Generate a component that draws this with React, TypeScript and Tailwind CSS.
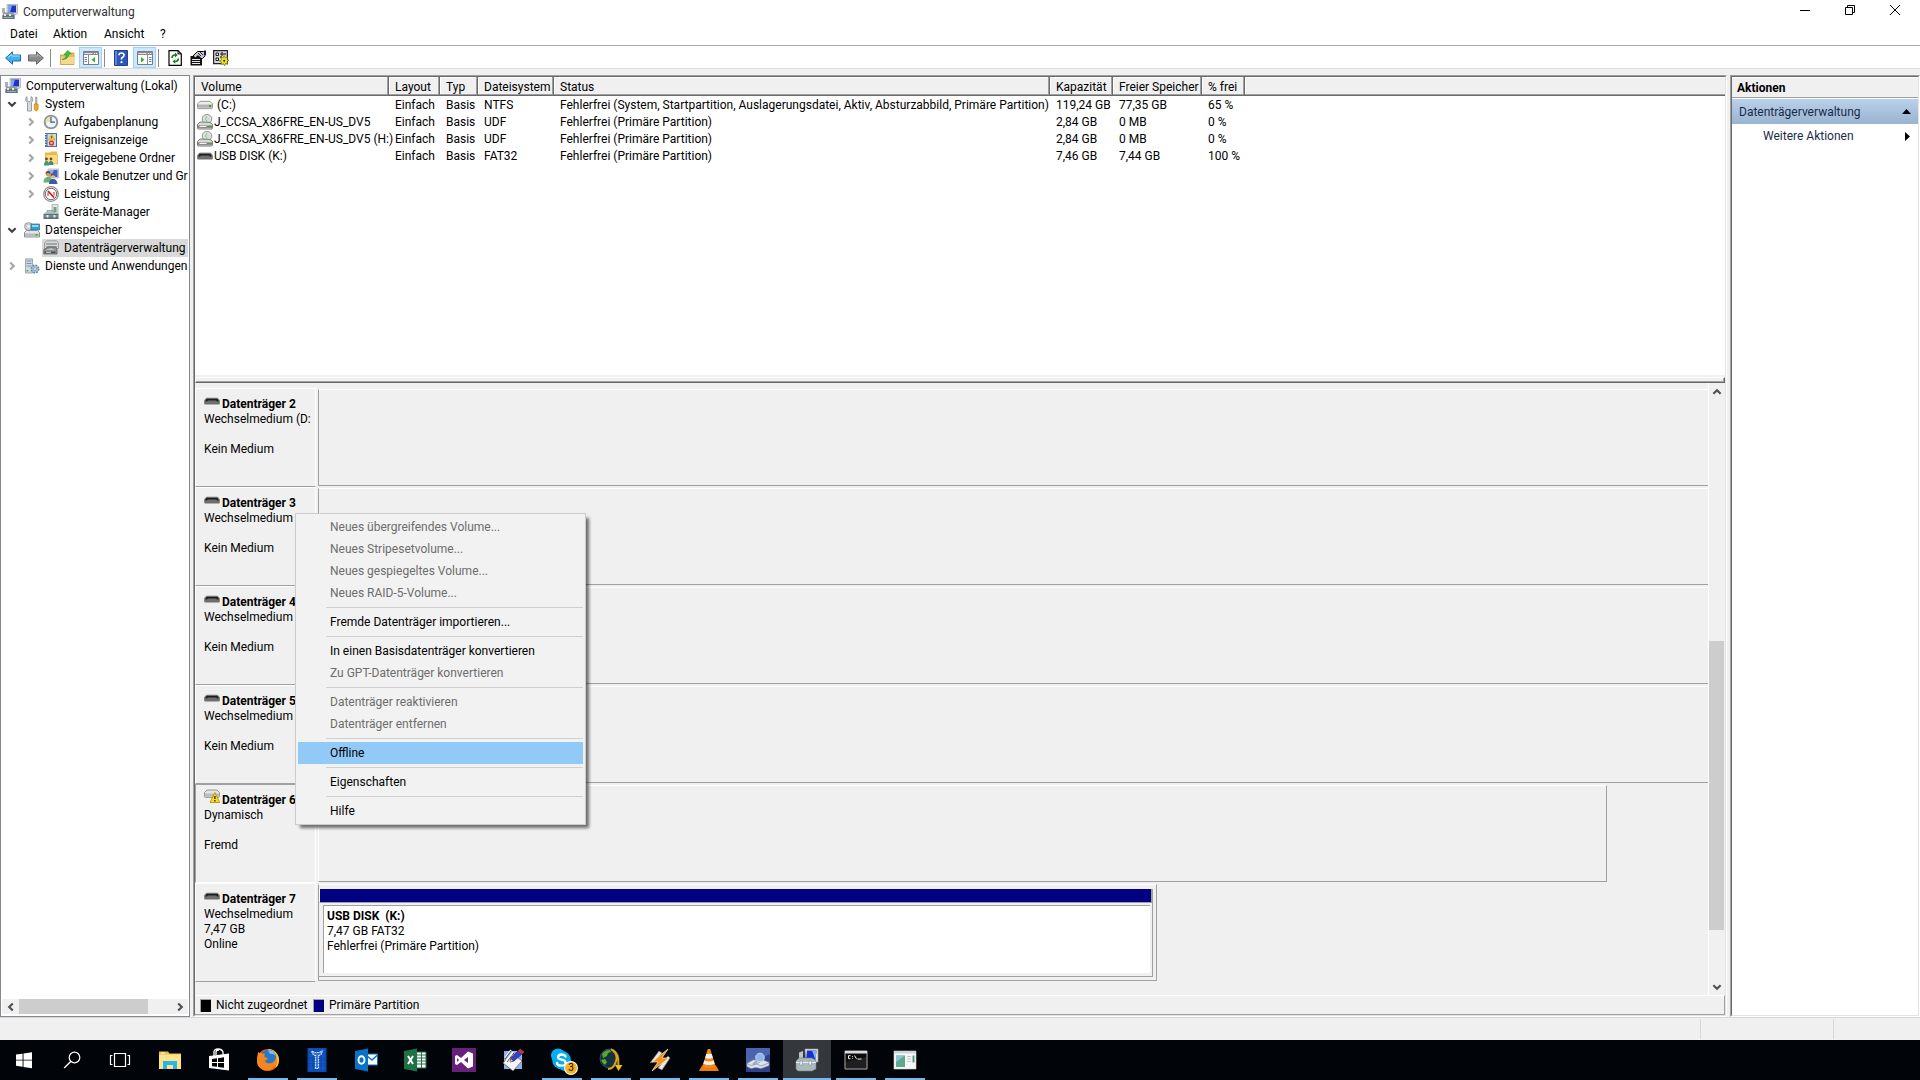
import React from "react";

type Kids = { children: React.ReactNode };

function Ico({ children }: Kids) {
  return (
    <svg className="size-4 shrink-0" viewBox="0 0 16 16" aria-hidden="true">
      {children}
    </svg>
  );
}

function Big({ children }: Kids) {
  return (
    <svg className="size-6" viewBox="0 0 24 24" aria-hidden="true">
      {children}
    </svg>
  );
}

/* ---------- small icons ---------- */

const Computer = () => (
  <Ico>
    <path d="M5 .5h10.500v9L13 11H5z" fill="#d8d8d0" stroke="#9a9a94" strokeWidth=".6" />
    <path d="M6 1.500h8v7H6z" fill="#1c34c8" />
    <path d="M6 1.500h4l-2 7H6z" fill="#7aa6f4" />
    <path d="M0 4h3v5H0z" fill="#a9b4b8" />
    <path d="M1 8.500h10l1.500 2V15H.5z" fill="#8d9da0" />
    <path d="M.5 11h12v4H.5z" fill="#5f7478" />
    <path d="M2 10h2v2H2zM7 10h2v2H7z" fill="#dfe8ea" />
    <path d="M2 13h9v1H2z" fill="#9fb0b3" />
  </Ico>
);
const Tools = () => (
  <Ico>
    <path d="M3 .5v4l2 1.500 2-1.500v-4c2 1 2.500 4 .5 6V15h-4V6.500C1 5 1 2 3 .5z" fill="#d7dadc" stroke="#85898c" strokeWidth=".8" />
    <path d="M11.500 1h1.500v7h-1.500z" fill="#b5b5b5" stroke="#888" strokeWidth=".5" />
    <path d="M10.300 8h3.800v5.500q-1.900 3-3.800 0z" fill="#f5a81c" stroke="#b8780c" strokeWidth=".6" />
  </Ico>
);
const Clock = () => (
  <Ico>
    <circle cx="8" cy="8" r="7.300" fill="#9a9a9a" />
    <circle cx="8" cy="8" r="5.900" fill="#eef3f8" stroke="#6f7780" strokeWidth=".7" />
    <path d="M8 2.500A5.500 5.500 0 0 0 2.500 8H8z" fill="#f0dfae" />
    <path d="M8 3v5.200h4" fill="none" stroke="#3c5a8a" strokeWidth="1.200" />
  </Ico>
);
const EventLog = () => (
  <Ico>
    <path d="M2 1h12v14H2z" fill="#4f6f9f" />
    <path d="M4.500 2H13v12H4.500z" fill="#c9d9ee" />
    <path d="M2 2.500h1.500M2 5h1.500M2 7.500h1.500M2 10h1.500M2 12.500h1.500" stroke="#e8eef6" />
    <path d="M8.700 2.200 12 8H5.500z" fill="#ffd21e" stroke="#b89000" strokeWidth=".5" />
    <path d="M8.700 4v2.400" stroke="#333" strokeWidth=".9" />
    <circle cx="8.500" cy="11" r="2.600" fill="#d8352c" />
    <path d="m7.500 10 2 2m0-2-2 2" stroke="#fff" strokeWidth=".8" />
  </Ico>
);
const SharedFolder = () => (
  <Ico>
    <path d="M2 2.500h5l1-1h6V14H2z" fill="#eebd48" />
    <path d="M2.500 4.500h12V14h-12z" fill="#fbdc85" stroke="#d6a43c" strokeWidth=".6" />
    <circle cx="3.500" cy="9" r="1.400" fill="#6a4a28" />
    <path d="M1 15.500q0-4.500 2.500-4.500T6 15.500z" fill="#3f9a75" />
    <circle cx="8" cy="9" r="1.400" fill="#6a4a28" />
    <path d="M5.600 15q0-4 2.400-4t2.400 4z" fill="#3c8a8a" />
  </Ico>
);
const Users = () => (
  <Ico>
    <path d="M5 1h10.500v9H5z" fill="#d8dadd" stroke="#9ea2a6" strokeWidth=".6" />
    <path d="M6 2h8.500v7H6z" fill="#2f62d8" />
    <path d="M6 2h5L8 9H6z" fill="#86b1f6" />
    <circle cx="5" cy="6" r="2.400" fill="#caa070" />
    <path d="M2.600 6Q2.500 3 5 3t2.400 3L5 4.800z" fill="#6b4222" />
    <path d="M.5 14.500Q.5 9 5 9t4.500 5.500z" fill="#6fb06a" />
    <circle cx="10" cy="8" r="2.400" fill="#e0ba8a" />
    <path d="M7.500 8.500q0-3.500 2.500-3.500t2.500 3.500L10 7z" fill="#7b5230" />
    <path d="M6 16q0-5 4-5t4.500 5z" fill="#3c58a8" />
  </Ico>
);
const Perf = () => (
  <Ico>
    <circle cx="8" cy="8" r="7.300" fill="#fff" stroke="#8e8e8e" strokeWidth="1.300" />
    <circle cx="8" cy="8" r="5.700" fill="#fdfdfd" stroke="#444" strokeWidth=".8" />
    <path d="M5 10V6.500M11 9.500V6" stroke="#c22" strokeWidth="1" />
    <path d="m5 5 6 6.500" stroke="#d01818" strokeWidth="1.700" />
  </Ico>
);
const DevMgr = () => (
  <Ico>
    <path d="M9 .5h6V10H9z" fill="#e4e8ea" stroke="#9aa0a4" strokeWidth=".7" />
    <path d="M10.500 3h3v5h-3z" fill="#68a878" />
    <path d="M4 6.500h6v3H4z" fill="#bfcacd" stroke="#6f7d80" strokeWidth=".6" />
    <path d="m1.500 9 2-1h9l2.500 1v1.500H.5z" fill="#aab8bc" />
    <path d="M.5 10h15v5H.5z" fill="#5d7175" />
    <path d="M1 12h14" stroke="#93a4a8" />
    <path d="M3.500 11h2v2.500h-2zM10.500 11h2v2.500h-2z" fill="#dfe6e8" />
  </Ico>
);
const Storage = () => (
  <Ico>
    <circle cx="4.500" cy="4.500" r="4" fill="#c9cdd0" stroke="#85898c" strokeWidth=".7" />
    <circle cx="4.500" cy="4.500" r="1.300" fill="#fff" />
    <path d="M7 2h8.500v6H7z" fill="#2aa0d8" stroke="#3a6a80" strokeWidth=".7" />
    <path d="M8 3h6.500v2H8z" fill="#8fd8f5" />
    <path d="M2.500 8.500h11l2 2V15H.5v-4.500z" fill="#e3e5e6" stroke="#777" strokeWidth=".8" />
    <path d="M1 11.500h14V14.600H1z" fill="#b9bdbf" />
    <path d="M11.500 12h2v2h-2z" fill="#3cc030" />
  </Ico>
);
const DiskMgmt = () => (
  <Ico>
    <path d="M3.500.8h10L15.500 3v5.500h-2V6.500h-10v2h-2V3z" fill="#d4d6d7" stroke="#8a8e90" strokeWidth=".8" />
    <path d="M3 4h11" stroke="#777" />
    <path d="m3 8.500 2-1.500h7l2 1.500V14H.8V9.500z" fill="#8e9294" stroke="#5c5c5c" strokeWidth=".8" />
    <path d="m2.500 9.500 5.500-1 4 1z" fill="#eee" />
    <path d="M1.500 11.500h11v1.600h-11z" fill="#484c4e" />
    <path d="M3 11.800h5v.9H3z" fill="#e8e8e8" />
  </Ico>
);
const Services = () => (
  <Ico>
    <path d="M1.500.8h7V15h-7z" fill="#cfdbe2" stroke="#8798a2" strokeWidth=".8" />
    <path d="M2.500 3h5M2.500 5.500h5M2.500 8h5" stroke="#6f8a99" strokeWidth=".9" />
    <path d="M2.500 12h1.800v1.500H2.500z" fill="#46b04c" />
    <circle cx="11" cy="11" r="3.700" fill="#a9c6de" stroke="#5f87a8" strokeWidth="1.600" strokeDasharray="1.700 1.200" />
    <circle cx="11" cy="11" r="1.400" fill="#fff" stroke="#5f87a8" strokeWidth=".7" />
  </Ico>
);
const Hdd = () => (
  <Ico>
    <path d="M3 4.300h10l2.500 2.500v3.700q0 1.200-1.200 1.200H1.700Q.5 11.700.5 10.500V6.800z" fill="#ececec" stroke="#8c8c8c" strokeWidth=".9" />
    <path d="M1 7.500h14v3.300H1z" fill="#b4b4b4" />
    <path d="M12 8h2v2h-2z" fill="#34a030" />
  </Ico>
);
const Optical = () => (
  <Ico>
    <ellipse cx="10" cy="5" rx="4.800" ry="4.600" fill="#dfe0e2" stroke="#8a8a8a" strokeWidth=".9" />
    <path d="M10 1.200 7.800 5 10 8.500z" fill="#7ed47a" />
    <circle cx="10" cy="5" r="1.200" fill="#fff" stroke="#999" strokeWidth=".5" />
    <path d="m3 8 10 .4 2.500 2v3.400q0 1.200-1 1.200h-13q-1 0-1-1v-3.400z" fill="#d9d9d9" stroke="#707070" strokeWidth=".9" />
    <path d="M1 11.500h14v2.300H1z" fill="#7a7a7a" />
    <path d="M2.500 12h7v1h-7z" fill="#f4f4f4" />
    <path d="M12.500 11.800h1.500v1.400h-1.500z" fill="#3db83a" />
  </Ico>
);
const Removable = () => (
  <Ico>
    <path d="M3 4h10l2.700 2.500H.3z" fill="#d0d0d0" />
    <path d="M2.500 5h11l2.300 2.200v3q0 1.300-1.300 1.300h-13Q.2 11.500.2 10.200v-3z" fill="#6e6e6e" />
    <path d="M2.500 6h11l1.300 2.500h-1.500L12 7.500H4L2.700 8.500H1.200z" fill="#1d1d1d" />
  </Ico>
);
const Foreign = () => (
  <Ico>
    <path d="M3 1h10l2.500 2.500v3.700q0 1.200-1.200 1.200H1.700Q.5 8.400.5 7.200V3.500z" fill="#e4e4e4" stroke="#8c8c8c" strokeWidth=".9" />
    <path d="M1 4.500h14v3H1z" fill="#bcbcbc" />
    <path d="M10.800 3.500 15.800 13.500H6z" fill="#ffd91c" stroke="#a88a00" strokeWidth=".8" />
    <path d="M10.900 7v3M10.900 11v1.400" stroke="#222" strokeWidth="1.300" />
  </Ico>
);

/* ---------- toolbar icons ---------- */

const Arrow = ({ back }: { back?: boolean }) => (
  <Ico>
    {back ? (
      <path d="M.6 8 7.500 1.800V5h8v6h-8v3.200z" fill="#3fb2ee" stroke="#1d6fae" strokeWidth="1" />
    ) : (
      <path d="M15.400 8 8.500 1.800V5h-8v6h8v3.200z" fill="#8b8b8b" stroke="#666" strokeWidth="1" />
    )}
    {back ? (
      <path d="M3 7.600 6.800 4.200V6h8" fill="none" stroke="#a9e0fb" />
    ) : (
      <path d="M1.500 6h8V4.200L12.800 7" fill="none" stroke="#b4b4b4" />
    )}
  </Ico>
);
const FolderUp = () => (
  <Ico>
    <path d="M1.500 5H7l1.500-2H15v11.500H1.500z" fill="#e9be62" stroke="#b98f3a" strokeWidth=".7" />
    <path d="M2 7h13v7H2z" fill="#f6d88e" />
    <path d="M3 9.500Q7 9 7.500 4.500L5 4.700 8.700.5l3.600 3.300-2.400.3Q9.500 9.500 3 9.500z" fill="#3ec42c" stroke="#218c18" strokeWidth=".6" />
  </Ico>
);
const PaneIcon = ({ right }: { right?: boolean }) => (
  <Ico>
    <path d="M.5 1.500h15v13H.5z" fill="#fff" stroke="#7c7c7c" strokeWidth="1" />
    <path d="M.5 2h15v3H.5z" fill="#8b8b8b" />
    <path d="M1.500 3.500h8" stroke="#e2e2e2" />
    <path d="M11 3h1.200v1H11zM13 3h1.200v1H13z" fill="#fff" />
    <path d={right ? "M10.500 5v9" : "M5.500 5v9"} stroke="#8b8b8b" />
    <path d={right ? "M12 7.500h2.500M12 9.500h2.500M12 11.500h2.500" : "M1.500 7.500H4M1.500 9.500H4M1.500 11.500H4"} stroke="#5d7fb0" />
    <path d={right ? "M4 7v5.500l3.500-2.700z" : "M12 7v5.500L8.500 9.800z"} fill="#2fb526" />
  </Ico>
);
const HelpIcon = () => (
  <Ico>
    <path d="M1.500.5h13v15h-13z" fill="#2f55b8" stroke="#23408c" />
    <path d="M2 1h2v14H2z" fill="#5d82dc" />
    <path d="M6 5.300Q6 3 8.500 3T11 5.200Q11 6.500 9.600 7.300T8.500 9.500" fill="none" stroke="#fff" strokeWidth="1.700" />
    <circle cx="8.500" cy="12.200" r="1.100" fill="#fff" />
  </Ico>
);
const RefreshIcon = () => (
  <Ico>
    <path d="M2 .6h9l3.300 3.300v11.500H2z" fill="#fff" stroke="#000" strokeWidth="1.200" />
    <path d="M11 .6v3.300h3.300" fill="none" stroke="#000" />
    <path d="M5 8q0-3 3-3" fill="none" stroke="#0a7d12" strokeWidth="1.500" />
    <path d="M8 2.600v4.800L10.700 5z" fill="#0a7d12" />
    <path d="M11.300 8.500q0 3-3 3" fill="none" stroke="#0a7d12" strokeWidth="1.500" />
    <path d="M8.300 9.200v4.600L5.600 11.500z" fill="#0a7d12" />
  </Ico>
);
const PropsIcon = () => (
  <Ico>
    <path d="M.5 6H12v9.500H.5z" fill="#111" />
    <path d="M2 9.500h8M2 11.500h8M2 13.500h8" stroke="#fff" strokeWidth=".9" />
    <path d="m3 6 4.500-4.500h6L15 3v3l-2.500 2.500H11L8 5.500 5.500 8z" fill="#c8c8c8" stroke="#000" strokeWidth="1" />
    <path d="m8 3 3 3M10 2l3 3" stroke="#000" strokeWidth=".8" />
    <path d="M14 .5h2V5h-2z" fill="#10106c" />
  </Ico>
);
const SettingsIcon = () => (
  <Ico>
    <path d="M.6.6h13.800v13H.6z" fill="#d6d6d6" stroke="#222" strokeWidth="1.200" />
    <path d="M3 3h2.500v2.500H3zM3 8h2.500v2.500H3zM8 3h2v2H8z" fill="#fff" stroke="#000" strokeWidth=".9" />
    <path d="M11 4h2M7 7h2" stroke="#000" />
    <path d="m11 5.500 1.200 2.300L14.500 7l-.5 2.500 2 .8-2 1.200L15 14l-2.300-.6L11.500 16l-1-2.300L8 14.500l.5-2.400-2.200-1.100 2.200-1L8 7.200l2.200.6z" fill="#f5e520" stroke="#554c00" strokeWidth=".5" />
    <circle cx="11.200" cy="10.800" r="1" fill="#222" />
  </Ico>
);

/* ---------- taskbar icons ---------- */

const WinLogo = () => (
  <Big>
    <path d="M4 6.600 10.600 5.700v6H4zM11.500 5.500 20 4.200v7.500h-8.500zM4 12.600h6.600v6.100L4 17.800zM11.500 12.600H20v7.600l-8.500-1.200z" fill="#fff" />
  </Big>
);
const SearchIcon = () => (
  <Big>
    <circle cx="14.500" cy="9.500" r="5.300" fill="none" stroke="#fff" strokeWidth="1.200" />
    <path d="m10.700 13.500-6.500 6.500" stroke="#fff" strokeWidth="1.400" />
  </Big>
);
const TaskView = () => (
  <Big>
    <path d="M6.500 5.500h11v13h-11zM4.500 7.500h-2v9h2M19.500 7.500h2v9h-2" fill="none" stroke="#fff" strokeWidth="1.200" />
  </Big>
);
const Explorer = () => (
  <Big>
    <path d="M1 3.500h9l1.500 2H23V21H1z" fill="#e9bf4b" />
    <path d="M1 6.500h22V21H1z" fill="#fde38c" />
    <path d="M3 4.500h4v1H3z" fill="#fff" />
    <path d="M5 13h14v8h-4v-4H9v4H5z" fill="#28b5ea" />
  </Big>
);
const Store = () => (
  <Big>
    <path d="M7 8V4q0-3 4-3t5 3v3M9 7V4q0-2 3-2" fill="none" stroke="#fff" strokeWidth="1.300" />
    <path d="M2 8 22 5.500V22.500L2 20z" fill="#fff" />
    <path d="M5 11l5-.7V14H5zM11 10.200l6-.9V14h-6zM5 15h5v3.800l-5-.6zM11 15h6v4.700l-6-.8z" fill="#000" />
  </Big>
);
const Firefox = () => (
  <Big>
    <circle cx="12" cy="12" r="11" fill="#e8590c" />
    <path d="M12 1a11 11 0 0 1 11 11q0 5-3.500 8Q22 12 16 7z" fill="#ffc428" />
    <circle cx="12.500" cy="9.500" r="7.800" fill="#2a78c8" />
    <path d="M12 2q6 0 8 6-3-3-6-2z" fill="#7cc4f0" />
    <path d="M2 4q1 1 3 1.200L9 6 8 8.500l4 2q-1 2-3.500 2 2 4 7 2.500 4-1.500 4.500-6 3 6-2 10.500t-11 2.500Q0 18.500 1 11z" fill="#f5851f" />
  </Big>
);
const BlueTool = () => (
  <Big>
    <path d="M2.500 0h19v24h-19z" fill="#0d4bb4" />
    <path d="M4 2h16M4 8h16M4 14h16M4 20h16M6 1v22M18 1v22" stroke="#2566cf" strokeWidth=".8" strokeDasharray="1.500 1" />
    <path d="M7 3q0 4 3.500 4.500V20.500h3V7.500Q17 7 17 3l-2.500 1.500h-5z" fill="#2f6fd4" stroke="#d8e6ff" strokeWidth="1.200" strokeDasharray="1.800 .7" />
  </Big>
);
const Outlook = () => (
  <Big>
    <path d="M12 6h11.500v11H12z" fill="#fff" stroke="#0a72c6" strokeWidth="1" />
    <path d="m12 7 6 5 5.500-5" fill="none" stroke="#0a72c6" strokeWidth="1.500" />
    <path d="M1 3 14 .5v23L1 21z" fill="#0a72c6" />
    <ellipse cx="7.500" cy="12" rx="3" ry="3.700" fill="none" stroke="#fff" strokeWidth="1.900" />
  </Big>
);
const Excel = () => (
  <Big>
    <path d="M12 4h11v16H12z" fill="#fff" stroke="#1e7145" />
    <path d="M13 7h10M13 10h10M13 13h10M13 16h10M18.500 4v16" stroke="#1e7145" strokeWidth="1" />
    <path d="M1 3 14 .5v23L1 21z" fill="#1e7145" />
    <path d="m5 8 5 8m0-8-5 8" stroke="#fff" strokeWidth="2" />
  </Big>
);
const VStudio = () => (
  <Big>
    <path d="M0 0h24v24H0z" fill="#68217a" />
    <path d="m16 3.500 5 2v13l-5 2-7-6.500-4 3-2-1V8l2-1 4 3zM5 10v4l2-2zM16 9l-4 3 4 3z" fill="#fff" fillRule="evenodd" />
  </Big>
);
const NoteTool = () => (
  <Big>
    <path d="M3 3h18v18H3z" fill="#8fb0f0" />
    <path d="m2 15 9-10 10 8-9 10z" fill="#f4f4f4" stroke="#666" strokeWidth=".8" />
    <path d="m4 10 6-8M5 13l7-9M8 15l6-8" stroke="#fff" strokeWidth="1.600" />
    <path d="m4 11 6-8M6 14l7-9" stroke="#222" strokeWidth=".8" />
    <path d="m9 14 1-4 8-8 4 3-9 8z" fill="#3b3fc0" stroke="#20206a" strokeWidth=".7" />
    <path d="m17 3 2-2.500 4.500 3.500-2.500 2z" fill="#c4343c" />
    <path d="m9 14 1-3 2 2z" fill="#f0c080" />
  </Big>
);
const Skype = () => (
  <Big>
    <circle cx="8" cy="7.500" r="7" fill="#00aff0" />
    <circle cx="15" cy="16" r="7" fill="#00aff0" />
    <circle cx="11.500" cy="12" r="9.300" fill="#00aff0" />
    <path d="M15.500 8.500Q14.500 6.500 11.500 6.500T8 9q0 2 3.700 2.700T15.700 15q0 2.700-4.200 2.700T7 15" fill="none" stroke="#fff" strokeWidth="2.300" strokeLinecap="round" />
  </Big>
);
const Globe = () => (
  <Big>
    <circle cx="10.500" cy="10.500" r="9.500" fill="#16303c" stroke="#3d5a64" strokeWidth=".8" />
    <path d="M3 6q3-4 8-4l1 2-3 1-1 3-4 2zM2 12l4-1 2 3-2 3q-3-2-4-5z" fill="#57a82c" />
    <path d="M12 1Q22 8 14 19q-2 2-5 2M14 2q6 4 5.500 16" fill="none" stroke="#dba318" strokeWidth="1.900" />
    <path d="m16 17 3.500 6 4-6z" fill="#f5b91c" />
  </Big>
);
const Winamp = () => (
  <Big>
    <path d="m2 15 9-12 3 2-7 8zM10 20l10-12 2 2-8 12z" fill="#e8e8e8" stroke="#777" strokeWidth=".6" />
    <path d="M20 1 4 14h6l-6 9L21 10h-7z" fill="#f5901e" stroke="#fff0d0" strokeWidth=".7" />
  </Big>
);
const Vlc = () => (
  <Big>
    <path d="M5 17.500h14l3 5.500H2z" fill="#f07c0c" />
    <path d="M10.800 1h2.400l5.300 17q-6.500 3.500-13 0z" fill="#f58a14" />
    <path d="m9.300 6 5.400 0 1.200 4q-3.900 1.500-7.800 0zM7.300 12.500q4.700 2 9.400 0l1 3.200q-5.700 2.500-11.400 0z" fill="#eef2f4" />
  </Big>
);
const DiskSearch = () => (
  <Big>
    <path d="M0 0h24v24H0z" fill="#2f438c" />
    <path d="M0 0h24v6L0 17z" fill="#4a64b0" />
    <path d="m1 15.500 6-3.500h10l6 2.500v3l-8 3-5-1-5 1-4-2z" fill="#dfe3ea" stroke="#8b93a4" strokeWidth=".6" />
    <path d="m1 15.500 4 2 6-1.500 4 2 8-3M10 16l4-2" fill="none" stroke="#8b93a4" strokeWidth=".8" />
    <circle cx="14" cy="9.500" r="4.300" fill="#8fb4e8" stroke="#c4d8f2" strokeWidth="1" />
    <path d="m11 13-4 3.500" stroke="#9aa4ba" strokeWidth="2" />
  </Big>
);
const CompMgmt = () => (
  <Big>
    <path d="M10 1h13v13l-12 1z" fill="#e3e3dc" stroke="#9b9b96" strokeWidth=".6" />
    <path d="M12 2.500h9.500L20.500 12H11z" fill="#1730d0" />
    <path d="M17 2.500h4.500L20.500 12z" fill="#86aaf6" />
    <path d="M4 4.500 8 3v8H4z" fill="#b9c4c6" />
    <path d="m1 13 3-3h13l4 2.500V21l-4 2H3l-2-2z" fill="#a9b9bd" stroke="#6e7f84" strokeWidth=".6" />
    <path d="M1 14.500h20" stroke="#e5eef0" />
    <path d="M5 13h2.500v4H5zM14 13h2.500v4H14z" fill="#f2f6f6" stroke="#6e7f84" strokeWidth=".5" />
  </Big>
);
const Terminal = () => (
  <Big>
    <path d="M1 3h22v18H1z" fill="#0c0c0c" stroke="#a9a9a9" strokeWidth="1" />
    <path d="M1 3h22v2.500H1z" fill="#dcdcdc" />
    <path d="M6.500 7.700H4.500v3h2M8.500 8v.8m0 1v.8M10.500 7.500l2 3.300M13.500 11h4" fill="none" stroke="#eee" strokeWidth="1" />
    <path d="M1.500 14 22.500 9v11.500h-21z" fill="#fff" opacity=".08" />
  </Big>
);
const AppWin = () => (
  <Big>
    <path d="M1 3h22v18H1z" fill="#f7f7f7" stroke="#d4d4d4" strokeWidth=".6" />
    <path d="M1 3h22v2.500H1z" fill="#cfd6da" />
    <path d="M3 7.500h9V19H3z" fill="#5da88f" />
    <path d="M3 7.500h9L3 14z" fill="#8cc4d8" />
    <path d="M14 8.500h4M14 11h4M14 13.500h4" stroke="#c6c6c6" />
    <path d="M19.500 7.500h2v7h-2z" fill="#4a9c80" />
  </Big>
);

function Chevron({ dir, className }: { dir: "down" | "up" | "left" | "right"; className: string }) {
  const d = {
    down: "M2 3.500 5 6.500 8 3.500",
    up: "M2 6.500 5 3.500 8 6.500",
    left: "M6.500 2 3.500 5 6.500 8",
    right: "M3.500 2 6.500 5 3.500 8",
  }[dir];
  return (
    <svg className={className} viewBox="0 0 10 10" aria-hidden="true">
      <path d={d} fill="none" stroke="currentColor" strokeWidth="1.800" />
    </svg>
  );
}

/* ---------- data ---------- */

type Node = { label: string; icon: React.FC; level: number; open?: boolean; selected?: boolean };
const tree: Node[] = [
  { label: "Computerverwaltung (Lokal)", icon: Computer, level: 0 },
  { label: "System", icon: Tools, level: 1, open: true },
  { label: "Aufgabenplanung", icon: Clock, level: 2, open: false },
  { label: "Ereignisanzeige", icon: EventLog, level: 2, open: false },
  { label: "Freigegebene Ordner", icon: SharedFolder, level: 2, open: false },
  { label: "Lokale Benutzer und Gruppen", icon: Users, level: 2, open: false },
  { label: "Leistung", icon: Perf, level: 2, open: false },
  { label: "Geräte-Manager", icon: DevMgr, level: 2 },
  { label: "Datenspeicher", icon: Storage, level: 1, open: true },
  { label: "Datenträgerverwaltung", icon: DiskMgmt, level: 2, selected: true },
  { label: "Dienste und Anwendungen", icon: Services, level: 1, open: false },
];
const indent = ["pl-[3px]", "pl-[3px]", "pl-[22px]"];

const columns = ["Volume", "Layout", "Typ", "Dateisystem", "Status", "Kapazität", "Freier Speicher", "% frei"];
const volumes: { icon: React.FC; cells: string[] }[] = [
  { icon: Hdd, cells: ["\u00a0(C:)", "Einfach", "Basis", "NTFS", "Fehlerfrei (System, Startpartition, Auslagerungsdatei, Aktiv, Absturzabbild, Primäre Partition)", "119,24 GB", "77,35 GB", "65 %"] },
  { icon: Optical, cells: ["J_CCSA_X86FRE_EN-US_DV5", "Einfach", "Basis", "UDF", "Fehlerfrei (Primäre Partition)", "2,84 GB", "0 MB", "0 %"] },
  { icon: Optical, cells: ["J_CCSA_X86FRE_EN-US_DV5 (H:)", "Einfach", "Basis", "UDF", "Fehlerfrei (Primäre Partition)", "2,84 GB", "0 MB", "0 %"] },
  { icon: Removable, cells: ["USB DISK (K:)", "Einfach", "Basis", "FAT32", "Fehlerfrei (Primäre Partition)", "7,46 GB", "7,44 GB", "100 %"] },
];

const disks = [
  { name: "Datenträger 2", lines: ["Wechselmedium (D:", "", "Kein Medium"] },
  { name: "Datenträger 3", lines: ["Wechselmedium", "", "Kein Medium"] },
  { name: "Datenträger 4", lines: ["Wechselmedium", "", "Kein Medium"] },
  { name: "Datenträger 5", lines: ["Wechselmedium", "", "Kein Medium"] },
  { name: "Datenträger 6", lines: ["Dynamisch", "", "Fremd"], foreign: true },
  { name: "Datenträger 7", lines: ["Wechselmedium", "7,47 GB", "Online"], usb: true },
];

type MenuEntry = { label: string; off?: boolean; hot?: boolean };
const menuGroups: MenuEntry[][] = [
  [
    { label: "Neues übergreifendes Volume...", off: true },
    { label: "Neues Stripesetvolume...", off: true },
    { label: "Neues gespiegeltes Volume...", off: true },
    { label: "Neues RAID-5-Volume...", off: true },
  ],
  [{ label: "Fremde Datenträger importieren..." }],
  [{ label: "In einen Basisdatenträger konvertieren" }, { label: "Zu GPT-Datenträger konvertieren", off: true }],
  [
    { label: "Datenträger reaktivieren", off: true },
    { label: "Datenträger entfernen", off: true },
  ],
  [{ label: "Offline", hot: true }],
  [{ label: "Eigenschaften" }],
  [{ label: "Hilfe" }],
];

const apps: { name: string; icon: React.FC; running?: boolean; active?: boolean; badge?: string }[] = [
  { name: "Explorer", icon: Explorer },
  { name: "Store", icon: Store },
  { name: "Firefox", icon: Firefox, running: true },
  { name: "Werkzeug", icon: BlueTool, running: true },
  { name: "Outlook", icon: Outlook },
  { name: "Excel", icon: Excel },
  { name: "Visual Studio", icon: VStudio },
  { name: "Notizen", icon: NoteTool },
  { name: "Skype", icon: Skype, running: true, badge: "3" },
  { name: "Downloads", icon: Globe, running: true },
  { name: "Winamp", icon: Winamp, running: true },
  { name: "VLC", icon: Vlc, running: true },
  { name: "Datenträgersuche", icon: DiskSearch, running: true },
  { name: "Computerverwaltung", icon: CompMgmt, running: true, active: true },
  { name: "Eingabeaufforderung", icon: Terminal, running: true },
  { name: "Anwendung", icon: AppWin, running: true },
];

/* ---------- parts ---------- */

function TitleBar() {
  return (
    <header className="flex h-6 shrink-0 items-center pr-[3px] pl-0.5">
      <Computer />
      <h1 className="ml-[5px] flex-1 text-[#333]">Computerverwaltung</h1>
      <div className="flex self-start">
        <button aria-label="Minimieren" className="flex h-5 w-[45px] items-center justify-center">
          <svg className="size-3" viewBox="0 0 12 12"><path d="M1 6.500h10" stroke="#000" /></svg>
        </button>
        <button aria-label="Verkleinern" className="flex h-5 w-[45px] items-center justify-center">
          <svg className="size-3" viewBox="0 0 12 12"><path d="M1.500 3.500h7v7h-7zM3.500 3.500v-2h7v7h-2" fill="none" stroke="#000" /></svg>
        </button>
        <button aria-label="Schließen" className="flex h-5 w-[45px] items-center justify-center">
          <svg className="size-3" viewBox="0 0 12 12"><path d="m1 1 10 10M11 1 1 11" stroke="#000" /></svg>
        </button>
      </div>
    </header>
  );
}

function Sep() {
  return <span className="mr-1 ml-0.5 h-[18px] w-px bg-[#8c8c8c]" />;
}

function ToolButton({ label, on, children }: Kids & { label: string; on?: boolean }) {
  return (
    <button
      aria-label={label}
      className={
        on
          ? "flex h-[21px] w-[23px] items-center justify-center border border-[#99d1ff] bg-[#cce8ff]"
          : "flex h-[21px] w-[23px] items-center justify-center"
      }
    >
      {children}
    </button>
  );
}

function Toolbar() {
  return (
    <div className="flex h-6 shrink-0 items-center border-t border-b border-t-[#a9acb5] border-b-[#dcdcdc] pt-px pl-px">
      <ToolButton label="Zurück"><Arrow back /></ToolButton>
      <ToolButton label="Vorwärts"><Arrow /></ToolButton>
      <span className="w-px" />
      <Sep />
      <ToolButton label="Nach oben"><FolderUp /></ToolButton>
      <span className="w-px" />
      <ToolButton label="Konsolenstruktur" on><PaneIcon /></ToolButton>
      <Sep />
      <ToolButton label="Hilfe"><HelpIcon /></ToolButton>
      <span className="w-px" />
      <ToolButton label="Aktionsbereich" on><PaneIcon right /></ToolButton>
      <Sep />
      <ToolButton label="Aktualisieren"><RefreshIcon /></ToolButton>
      <ToolButton label="Eigenschaften"><PropsIcon /></ToolButton>
      <ToolButton label="Einstellungen"><SettingsIcon /></ToolButton>
    </div>
  );
}

function Tree() {
  return (
    <nav className="flex w-[190px] shrink-0 flex-col border border-[#828790] bg-white">
      <ul className="flex-1 overflow-hidden pt-px pr-px">
        {tree.map((n) => (
          <li key={n.label} className={`flex ${indent[n.level]}`}>
            {n.level > 0 && (
              <span className="flex w-[19px] shrink-0 items-center">
                {n.open !== undefined && (
                  <Chevron
                    dir={n.open ? "down" : "right"}
                    className={n.open ? "ml-0.5 size-3 text-[#404040]" : "ml-0.5 size-3 text-[#a6a6a6]"}
                  />
                )}
              </span>
            )}
            <button
              className={
                n.selected
                  ? "flex h-[18px] min-w-0 flex-1 items-center gap-[5px] overflow-hidden bg-[#d9d9d9] pl-px text-left whitespace-nowrap"
                  : "flex h-[18px] min-w-0 flex-1 items-center gap-[5px] overflow-hidden pl-px text-left whitespace-nowrap"
              }
            >
              <n.icon />
              <span>{n.label}</span>
            </button>
          </li>
        ))}
      </ul>
      <div className="mx-px mb-0.5 flex h-[15px] items-center bg-[#f0f0f0]">
        <button aria-label="Nach links" className="flex w-[17px] justify-center text-[#505050]">
          <Chevron dir="left" className="size-3" />
        </button>
        <div className="flex flex-1">
          <div className="h-[15px] w-[129px] bg-[#cdcdcd]" />
        </div>
        <button aria-label="Nach rechts" className="flex w-[17px] justify-center text-[#505050]">
          <Chevron dir="right" className="size-3" />
        </button>
      </div>
    </nav>
  );
}

function VolumeList() {
  return (
    <section className="h-[298px] shrink-0 overflow-hidden bg-white">
      <table className="w-full table-fixed border-collapse text-left whitespace-nowrap">
        <colgroup>
          <col className="w-[194px]" />
          <col className="w-[51px]" />
          <col className="w-[38px]" />
          <col className="w-[76px]" />
          <col className="w-[496px]" />
          <col className="w-[63px]" />
          <col className="w-[89px]" />
          <col className="w-[43px]" />
          <col />
        </colgroup>
        <thead>
          <tr className="h-[19px] bg-[#f0f0f0]">
            {columns.map((c) => (
              <th
                key={c}
                scope="col"
                className="p-0 font-normal shadow-[inset_-1px_-1px_0_#696969,inset_-2px_-2px_0_#a0a0a0,inset_1px_1px_0_#fff]"
              >
                <span className="block pt-px pl-1.5 leading-4">{c}</span>
              </th>
            ))}
            <td className="shadow-[inset_0_-1px_0_#696969,inset_0_-2px_0_#a0a0a0,inset_1px_1px_0_#fff]" />
          </tr>
        </thead>
        <tbody>
          {volumes.map((v) => (
            <tr key={v.cells[0]} className="h-[17px]">
              {v.cells.map((c, i) => (
                <td key={i} className="p-0">
                  {i === 0 ? (
                    <span className="flex h-[17px] items-end gap-px pl-0.5">
                      <v.icon />
                      {c}
                    </span>
                  ) : (
                    <span className="block pt-px pl-1.5 leading-4">{c}</span>
                  )}
                </td>
              ))}
              <td />
            </tr>
          ))}
        </tbody>
      </table>
    </section>
  );
}

function DiskRow({ disk }: { disk: (typeof disks)[number] }) {
  const raised = "w-[121px] shrink-0 overflow-hidden border border-white border-b-[#a0a0a0] pt-2 pl-2 whitespace-nowrap";
  const sunken = "w-[121px] shrink-0 overflow-hidden border border-white border-t-[#a0a0a0] border-l-[#a0a0a0] pt-2 pl-2 whitespace-nowrap";
  return (
    <div className="flex h-[99px] shrink-0 gap-0.5">
      <div className={disk.foreign ? sunken : raised}>
        <div className="flex h-[15px] font-bold">
          <span className="-mt-1 flex">{disk.foreign ? <Foreign /> : <Removable />}</span>
          <span className="ml-0.5 leading-[15px]">{disk.name}</span>
        </div>
        {disk.lines.map((l, i) => (
          <p key={i} className="h-[15px] leading-[15px]">{l}</p>
        ))}
      </div>
      {disk.usb ? (
        <div className="mt-px mb-px flex w-[839px] flex-col border border-[#a0a0a0] border-t-white pt-1 pr-[3px] pb-[3px]">
          <div className="flex flex-1 flex-col border-r border-b border-[#a0a0a0]">
            <div className="h-3.5 border-r border-b border-[#a0a0a0] border-l border-l-white bg-[#000080]" />
            <div className="mt-0.5 mr-0.5 mb-[3px] ml-1 flex-1 border-t border-l border-[#a0a0a0] bg-white pt-[3px] pl-[3px] leading-[15px]">
              <p className="font-bold whitespace-pre">USB DISK  (K:)</p>
              <p>7,47 GB FAT32</p>
              <p>Fehlerfrei (Primäre Partition)</p>
            </div>
          </div>
        </div>
      ) : disk.foreign ? (
        <div className="mt-px mr-[101px] mb-px flex-1 border border-white border-r-[#a0a0a0] border-b-[#a0a0a0]" />
      ) : (
        <div className="mt-px mb-px flex-1 border-t border-b border-l border-t-white border-b-[#a0a0a0] border-l-[#a0a0a0]" />
      )}
    </div>
  );
}

function DiskView() {
  return (
    <section className="flex min-h-0 flex-1">
      <div className="flex min-w-0 flex-1 flex-col overflow-hidden pt-[5px]">
        {disks.map((d) => (
          <DiskRow key={d.name} disk={d} />
        ))}
      </div>
      <div className="flex w-[17px] flex-col items-center border-l border-white text-[#505050]">
        <button aria-label="Nach oben" className="flex h-[17px] items-center">
          <Chevron dir="up" className="size-3" />
        </button>
        <div className="flex w-full flex-1 flex-col">
          <div className="flex-[241]" />
          <div className="mr-px flex-[289] bg-[#cdcdcd]" />
          <div className="flex-[48]" />
        </div>
        <button aria-label="Nach unten" className="flex h-[17px] items-center">
          <Chevron dir="down" className="size-3" />
        </button>
      </div>
    </section>
  );
}

function Legend() {
  return (
    <div className="flex h-5 shrink-0 items-center border-t border-r border-b border-t-white border-r-[#a0a0a0] border-b-[#a0a0a0] pl-[5px]">
      <span className="h-[13px] w-[11px] border-t border-l border-[#a0a0a0] bg-black" />
      <span className="w-[102px] pl-[5px] whitespace-nowrap">Nicht zugeordnet</span>
      <span className="h-[13px] w-[11px] border-t border-l border-[#a0a0a0] bg-[#000080]" />
      <span className="pl-[5px]">Primäre Partition</span>
    </div>
  );
}

function Actions() {
  return (
    <aside className="flex w-[190px] shrink-0 border border-t-[#a0a0a0] border-r-white border-b-white border-l-[#a0a0a0]">
      <div className="flex min-w-0 flex-1 flex-col border border-t-[#696969] border-r-[#e3e3e3] border-b-[#e3e3e3] border-l-[#696969] bg-white">
        <h2 className="mt-px h-5 border-b border-[#a0a0a0] bg-[#f0f0f0] pl-[5px] leading-5 font-bold">Aktionen</h2>
        <button className="mt-px flex h-[25px] items-center justify-between bg-linear-to-b from-[#b9d1ea] to-[#99b4d1] pr-[7px] pl-[7px] text-left text-[#1c2a4a]">
          Datenträgerverwaltung
          <svg className="h-[5px] w-[9px]" viewBox="0 0 9 5"><path d="M0 5 4.500 0 9 5z" fill="#000" /></svg>
        </button>
        <button className="flex h-6 items-center justify-between pr-2 pl-[31px] text-left text-[#1c2a4a]">
          Weitere Aktionen
          <svg className="h-[9px] w-[5px]" viewBox="0 0 5 9"><path d="M0 0 5 4.500 0 9z" fill="#000" /></svg>
        </button>
      </div>
    </aside>
  );
}

function ContextMenu() {
  return (
    <div role="menu" className="absolute top-[513px] left-[295px] w-[291px] border border-[#cccccc] bg-[#f2f2f2] p-0.5 shadow-[4px_4px_3px_-1px_rgba(0,0,0,0.55)]">
      {menuGroups.map((g, gi) => (
        <div key={gi} role="group">
          {gi > 0 && <div className="ml-7 flex h-[7px] items-center"><div className="h-px flex-1 bg-[#d0d0d0]" /></div>}
          {g.map((m) => (
            <button
              key={m.label}
              role="menuitem"
              disabled={m.off}
              className={
                m.hot
                  ? "block h-[22px] w-full bg-[#91c9f7] pl-8 text-left leading-[22px]"
                  : m.off
                    ? "block h-[22px] w-full pl-8 text-left leading-[22px] text-[#6d6d6d]"
                    : "block h-[22px] w-full pl-8 text-left leading-[22px]"
              }
            >
              {m.label}
            </button>
          ))}
        </div>
      ))}
    </div>
  );
}

function Taskbar() {
  return (
    <footer className="flex h-10 shrink-0 bg-[#010409]">
      <button aria-label="Start" className="flex w-12 items-center justify-center"><WinLogo /></button>
      <button aria-label="Suchen" className="flex w-12 items-center justify-center"><SearchIcon /></button>
      <button aria-label="Taskansicht" className="mr-0.5 flex w-12 items-center justify-center"><TaskView /></button>
      {apps.map((a) => (
        <button
          key={a.name}
          aria-label={a.name}
          className={
            a.active
              ? "mr-px flex w-12 flex-col items-center bg-[#34373b]"
              : "mr-px flex w-12 flex-col items-center"
          }
        >
          <span className="relative flex flex-1 items-center pt-0.5">
            <a.icon />
            {a.badge && (
              <span className="absolute right-[-3px] bottom-1 flex size-3 items-center justify-center rounded-full bg-[#fdb022] text-[10px] leading-3 text-black ring-1 ring-white">
                {a.badge}
              </span>
            )}
          </span>
          <span
            className={
              a.active ? "h-0.5 w-full bg-[#76b9ed]" : a.running ? "h-0.5 w-10 bg-[#76b9ed]" : "h-0.5 w-10"
            }
          />
        </button>
      ))}
    </footer>
  );
}

export default function App() {
  return (
    <div className="relative flex h-screen flex-col overflow-hidden bg-white font-['Roboto',sans-serif] text-[12px] leading-4 text-black">
      <TitleBar />
      <nav className="flex h-[21px] shrink-0 items-center pb-px pl-2.5">
        <button className="w-[43px] text-left">Datei</button>
        <button className="w-[51px] text-left">Aktion</button>
        <button className="w-14 text-left">Ansicht</button>
        <button className="text-left">?</button>
      </nav>
      <Toolbar />
      <main className="flex min-h-0 flex-1 gap-[3px] bg-[#f0f0f0] pt-1.5">
        <Tree />
        <div className="flex min-w-0 flex-1 border border-t-[#a0a0a0] border-r-white border-b-white border-l-[#a0a0a0]">
          <div className="flex min-w-0 flex-1 flex-col border border-t-[#696969] border-r-[#e3e3e3] border-b-[#e3e3e3] border-l-[#696969]">
            <VolumeList />
            <div className="flex h-2 shrink-0 flex-col pt-0.5">
              <div className="flex-1 border border-t-white border-r-[#696969] border-b-[#696969] border-l-white shadow-[inset_-1px_-1px_0_#a0a0a0]" />
            </div>
            <DiskView />
            <Legend />
          </div>
        </div>
        <Actions />
      </main>
      <div className="flex h-[23px] shrink-0 justify-end border-t border-[#d7d7d7] bg-[#f0f0f0] py-px">
        <span className="w-[133px] border-l border-[#d7d7d7]" />
        <span className="w-[87px] border-l border-[#d7d7d7]" />
      </div>
      <Taskbar />
      <ContextMenu />
    </div>
  );
}
